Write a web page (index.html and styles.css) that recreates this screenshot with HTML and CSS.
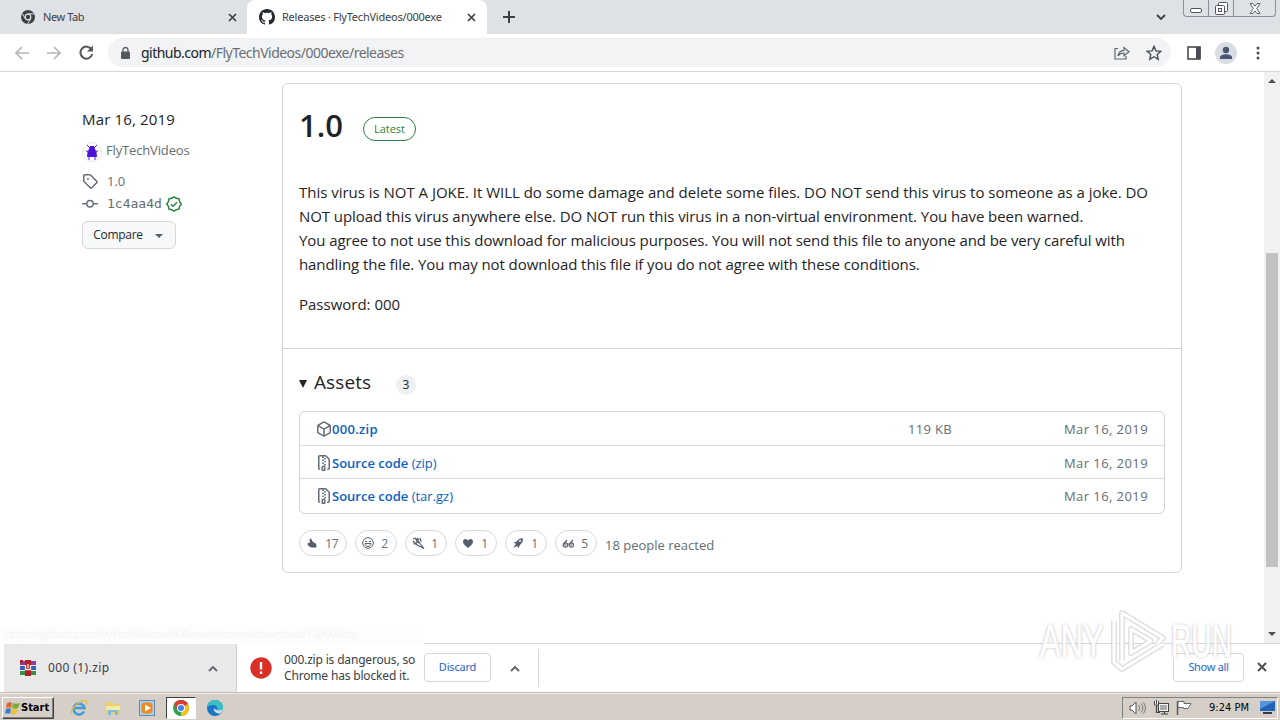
FILE: index.html
```html
<!DOCTYPE html>
<html lang="en">
<head>
    <meta charset="UTF-8">
    <meta name="viewport" content="width=device-width, initial-scale=1.0">
    <title>Releases · FlyTechVideos/000exe</title>
    <link rel="stylesheet" href="styles.css">
</head>
<body>
    <div class="tabstrip">
        <div class="tab">
            <svg class="favicon" width="14" height="14" viewBox="0 0 14 14"><circle cx="7" cy="7" r="7" fill="#3c4043"/><circle cx="7" cy="7" r="3.4" fill="#dee1e6"/><circle cx="7" cy="7" r="2.2" fill="#3c4043"/><path d="M7 3.8h6.4M4.2 8.6L1 3.2M9.8 8.6L6.6 14" stroke="#dee1e6" stroke-width="1"/></svg>
            <span class="tab-title">New Tab</span>
            <svg class="tab-close" width="9" height="9" viewBox="0 0 9 9"><path d="M1 1l7 7M8 1l-7 7" stroke="#3c4043" stroke-width="1.7"/></svg>
        </div>
        <div class="tab active">
            <svg class="favicon" width="16" height="16" viewBox="0 0 16 16"><path fill="#24292f" d="M8 0c4.42 0 8 3.58 8 8a8.013 8.013 0 0 1-5.45 7.59c-.4.08-.55-.17-.55-.38 0-.27.01-1.13.01-2.2 0-.75-.25-1.23-.54-1.48 1.78-.2 3.65-.88 3.65-3.95 0-.88-.31-1.59-.82-2.15.08-.2.36-1.02-.08-2.12 0 0-.67-.22-2.2.82-.64-.18-1.32-.27-2-.27-.68 0-1.36.09-2 .27-1.53-1.03-2.2-.82-2.2-.82-.44 1.1-.16 1.92-.08 2.12-.51.56-.82 1.28-.82 2.15 0 3.06 1.86 3.75 3.64 3.95-.23.2-.44.55-.51 1.07-.46.21-1.61.55-2.33-.66-.15-.24-.6-.83-1.23-.82-.67.01-.27.38.01.53.34.19.73.9.82 1.13.16.45.68 1.31 2.69.94 0 .67.01 1.3.01 1.49 0 .21-.15.45-.55.38A7.995 7.995 0 0 1 0 8c0-4.42 3.58-8 8-8Z"/></svg>
            <span class="tab-title">Releases · FlyTechVideos/000exe</span>
            <svg class="tab-close" width="9" height="9" viewBox="0 0 9 9"><path d="M1 1l7 7M8 1l-7 7" stroke="#3c4043" stroke-width="1.7"/></svg>
        </div>
        <svg class="new-tab" width="12" height="12" viewBox="0 0 12 12"><path d="M6 0v12M0 6h12" stroke="#3c4043" stroke-width="2"/></svg>
        <svg class="tab-search" width="10" height="7" viewBox="0 0 10 7"><path d="M1 1l4 4 4-4" fill="none" stroke="#3c4043" stroke-width="1.8"/></svg>
        <div class="window-buttons">
            <span class="win-btn win-min"><svg width="13" height="5" viewBox="0 0 13 5"><rect x=".5" y=".5" width="11" height="4" rx="1.5" fill="#fff" stroke="#50545e"/></svg></span>
            <span class="win-btn win-max"><svg width="13" height="13" viewBox="0 0 13 13"><rect x="3.5" y=".5" width="9" height="9" rx="1" fill="#fff" stroke="#50545e"/><rect x=".5" y="3.5" width="9" height="9" rx="1" fill="#fff" stroke="#50545e"/><rect x="3.5" y="6.5" width="3" height="3" fill="none" stroke="#50545e"/></svg></span>
            <span class="win-btn win-close"><svg width="12" height="11" viewBox="0 0 12 11"><path d="M1 .5h3l2 2.700 2-2.700h3L7.700 5.500l3.300 5H8L6 7.800 4 10.500H1l3.300-5z" fill="#fff" stroke="#50545e" stroke-width=".9"/></svg></span>
        </div>
    </div>

    <div class="toolbar">
        <svg class="nav-icon" width="14" height="14" viewBox="0 0 14 14"><path d="M14 7H1.500M7 1L1 7l6 6" fill="none" stroke="#b4b6b9" stroke-width="1.700"/></svg>
        <svg class="nav-icon" width="14" height="14" viewBox="0 0 14 14"><path d="M0 7h12.500M7 1l6 6-6 6" fill="none" stroke="#b4b6b9" stroke-width="1.700"/></svg>
        <svg class="nav-icon" width="15" height="15" viewBox="0 0 15 15"><path d="M12.600 4.500A6 6 0 1 0 13.300 9" fill="none" stroke="#55585c" stroke-width="2"/><path d="M14 .500v6H8z" fill="#55585c"/></svg>
        <div class="omnibox">
            <svg width="9" height="12" viewBox="0 0 9 12"><rect y="4.500" width="9" height="7.500" rx="1" fill="#55585c"/><path d="M2 5V3a2.500 2.500 0 0 1 5 0v2" fill="none" stroke="#55585c" stroke-width="1.300"/></svg>
            <span class="url"><b>github.com</b>/FlyTechVideos/000exe/releases</span>
            <svg class="share" width="16" height="15" viewBox="0 0 16 15"><path d="M4 3.500H1v10.500h11V11M4 11c.5-3.500 2.500-5.500 6-5.700V2.500l5 4.200-5 4V8C7.500 8 5.500 9 4 11z" fill="none" stroke="#5f6368" stroke-width="1.200"/></svg>
            <svg class="star" width="16" height="16" viewBox="0 0 14 14"><path d="M7 1.200l1.700 3.900 4.300.4-3.200 2.800.9 4.200L7 10.300l-3.700 2.200.9-4.200L1 5.500l4.300-.4z" fill="none" stroke="#4a4d52" stroke-width="1.200"/></svg>
        </div>
        <svg class="side-panel" width="14" height="14" viewBox="0 0 14 14"><rect x="1" y="1" width="12" height="12" fill="#fff" stroke="#4a4d52" stroke-width="1.600"/><rect x="9" y="1" width="4.500" height="12" fill="#4a4d52"/></svg>
        <svg class="profile" width="22" height="22" viewBox="0 0 22 22"><circle cx="11" cy="11" r="11" fill="#dadde2"/><circle cx="11" cy="8" r="3.200" fill="#4a5673"/><path d="M5 17v-1.500c0-2.200 3-3.300 6-3.300s6 1.100 6 3.300V17z" fill="#4a5673"/></svg>
        <svg class="kebab" width="4" height="14" viewBox="0 0 4 14"><g fill="#4a4d52"><circle cx="2" cy="2" r="1.500"/><circle cx="2" cy="7" r="1.500"/><circle cx="2" cy="12" r="1.500"/></g></svg>
    </div>

    <div class="viewport">
        <div class="sidebar">
            <div class="release-date">Mar 16, 2019</div>
            <div class="author">
                <svg width="20" height="20" viewBox="0 0 20 20"><circle cx="10" cy="10" r="9.500" fill="#fff" stroke="#e4e4e8"/><path d="M8 4h4l1 3 1.500 3 .5 5H5l.500-5L7 7z" fill="#4a12d8"/><path d="M5 3l3 3M15 3l-3 3M4 9l3 .5M16 9l-3 .5M7 13v5M13 13v5" stroke="#5b25dc" stroke-width="1"/></svg>
                <span>FlyTechVideos</span>
            </div>
            <div class="meta tag-row">
                <svg width="16" height="16" viewBox="0 0 16 16"><path fill="#656d76" d="M1 7.775V2.750C1 1.784 1.784 1 2.750 1h5.025c.464 0 .91.184 1.238.513l6.250 6.250a1.750 1.750 0 0 1 0 2.474l-5.026 5.026a1.750 1.750 0 0 1-2.474 0l-6.250-6.250A1.752 1.752 0 0 1 1 7.775Zm1.500 0c0 .066.026.13.073.177l6.250 6.250a.25.25 0 0 0 .354 0l5.025-5.025a.25.25 0 0 0 0-.354l-6.250-6.250a.25.25 0 0 0-.177-.073H2.750a.25.25 0 0 0-.25.25ZM6 5a1 1 0 1 1 0 2 1 1 0 0 1 0-2Z"/></svg>
                <span>1.0</span>
            </div>
            <div class="meta commit-row">
                <svg width="16" height="16" viewBox="0 0 16 16"><path fill="#656d76" d="M11.930 8.500a4.002 4.002 0 0 1-7.860 0H.75a.75.75 0 0 1 0-1.500h3.320a4.002 4.002 0 0 1 7.860 0h3.320a.75.75 0 0 1 0 1.500Zm-1.430-.75a2.500 2.500 0 1 0-5 0 2.500 2.500 0 0 0 5 0Z"/></svg>
                <code>1c4aa4d</code>
                <svg width="16" height="16" viewBox="0 0 16 16"><path d="M8 .9l2.300 1.400 2.700.5.600 2.800L15.200 8l-1.600 2.400-.6 2.700-2.700.6L8 15.200l-2.300-1.500-2.700-.6-.6-2.700L.8 8l1.600-2.400.6-2.800 2.700-.5z" fill="none" stroke="#2c8244" stroke-width="1.500" stroke-linejoin="round"/><path d="M5 8.200l2.100 2L11 6.200" fill="none" stroke="#2c8244" stroke-width="1.500"/></svg>
            </div>
            <button class="compare">Compare <i class="caret"></i></button>
        </div>

        <div class="release">
            <div class="release-body">
                <div class="release-head">
                    <h1>1.0</h1>
                    <span class="latest">Latest</span>
                </div>
                <div class="notes">
                    <p>
                        <span class="line l1">This virus is NOT A JOKE. It WILL do some damage and delete some files. DO NOT send this virus to someone as a joke. DO</span>
                        <span class="line l2">NOT upload this virus anywhere else. DO NOT run this virus in a non-virtual environment. You have been warned.</span>
                        <span class="line l3">You agree to not use this download for malicious purposes. You will not send this file to anyone and be very careful with</span>
                        <span class="line l4">handling the file. You may not download this file if you do not agree with these conditions.</span>
                    </p>
                    <p><span class="line l5">Password: 000</span></p>
                </div>
            </div>
            <div class="assets">
                <div class="assets-head">
                    <i class="disclosure"></i>
                    <h2>Assets</h2>
                    <span class="counter">3</span>
                </div>
                <div class="asset-list">
                    <div class="asset">
                        <svg width="16" height="16" viewBox="0 0 16 16"><path fill="#656d76" d="m8.878.392 5.250 3.045c.54.314.872.89.872 1.514v6.098a1.750 1.750 0 0 1-.872 1.514l-5.250 3.045a1.750 1.750 0 0 1-1.756 0l-5.250-3.045A1.750 1.750 0 0 1 1 11.049V4.951c0-.624.332-1.201.872-1.514L7.122.392a1.750 1.750 0 0 1 1.756 0ZM7.875 1.690l-4.630 2.685L8 7.133l4.755-2.758-4.630-2.685a.248.248 0 0 0-.25 0ZM2.500 5.677v5.372c0 .09.047.171.125.216l4.625 2.683V8.432Zm6.250 8.271 4.625-2.683a.25.25 0 0 0 .125-.216V5.677L8.750 8.432Z"/></svg>
                        <a href="#" class="name-zip"><b>000.zip</b></a>
                        <span class="size">119 KB</span>
                        <span class="date">Mar 16, 2019</span>
                    </div>
                    <div class="asset source-zip">
                        <svg width="16" height="16" viewBox="0 0 16 16"><path fill="#656d76" d="M3.500 1.750v11.500c0 .09.048.173.126.217a.75.75 0 0 1-.752 1.298A1.748 1.748 0 0 1 2 13.250V1.750C2 .784 2.784 0 3.750 0h5.586c.464 0 .909.185 1.237.513l2.914 2.914c.329.328.513.773.513 1.237v8.586A1.750 1.750 0 0 1 12.250 15h-.5a.75.75 0 0 1 0-1.500h.5a.25.25 0 0 0 .25-.25V4.664a.25.25 0 0 0-.073-.177L9.513 1.573a.25.25 0 0 0-.177-.073H7.250a.75.75 0 0 1 0 1.500h-.5a.75.75 0 0 1 0-1.500h-3a.25.25 0 0 0-.25.25Zm3.750 8.750h.5c.966 0 1.750.784 1.750 1.750v3a.75.75 0 0 1-.75.75h-2.500a.75.75 0 0 1-.75-.75v-3c0-.966.784-1.750 1.750-1.750ZM6 5.250a.75.75 0 0 1 .75-.75h.5a.75.75 0 0 1 0 1.500h-.5A.75.75 0 0 1 6 5.250Zm.75 2.250h.5a.75.75 0 0 1 0 1.500h-.5a.75.75 0 0 1 0-1.500ZM8 6.750A.75.75 0 0 1 8.750 6h.5a.75.75 0 0 1 0 1.500h-.5A.75.75 0 0 1 8 6.750ZM8.750 3h.5a.75.75 0 0 1 0 1.500h-.5a.75.75 0 0 1 0-1.500ZM8 9.750A.75.75 0 0 1 8.750 9h.5a.75.75 0 0 1 0 1.500h-.5A.75.75 0 0 1 8 9.750Zm-1 2.500v2.250h1v-2.250a.25.25 0 0 0-.25-.25h-.5a.25.25 0 0 0-.25.25Z"/></svg>
                        <a href="#"><b>Source code</b> (zip)</a>
                        <span class="date">Mar 16, 2019</span>
                    </div>
                    <div class="asset">
                        <svg width="16" height="16" viewBox="0 0 16 16"><path fill="#656d76" d="M3.500 1.750v11.500c0 .09.048.173.126.217a.75.75 0 0 1-.752 1.298A1.748 1.748 0 0 1 2 13.250V1.750C2 .784 2.784 0 3.750 0h5.586c.464 0 .909.185 1.237.513l2.914 2.914c.329.328.513.773.513 1.237v8.586A1.750 1.750 0 0 1 12.250 15h-.5a.75.75 0 0 1 0-1.500h.5a.25.25 0 0 0 .25-.25V4.664a.25.25 0 0 0-.073-.177L9.513 1.573a.25.25 0 0 0-.177-.073H7.250a.75.75 0 0 1 0 1.500h-.5a.75.75 0 0 1 0-1.500h-3a.25.25 0 0 0-.25.25Zm3.750 8.750h.5c.966 0 1.750.784 1.750 1.750v3a.75.75 0 0 1-.75.75h-2.500a.75.75 0 0 1-.75-.75v-3c0-.966.784-1.750 1.750-1.750ZM6 5.250a.75.75 0 0 1 .75-.75h.5a.75.75 0 0 1 0 1.500h-.5A.75.75 0 0 1 6 5.250Zm.75 2.250h.5a.75.75 0 0 1 0 1.500h-.5a.75.75 0 0 1 0-1.500ZM8 6.750A.75.75 0 0 1 8.750 6h.5a.75.75 0 0 1 0 1.500h-.5A.75.75 0 0 1 8 6.750ZM8.750 3h.5a.75.75 0 0 1 0 1.500h-.5a.75.75 0 0 1 0-1.500ZM8 9.750A.75.75 0 0 1 8.750 9h.5a.75.75 0 0 1 0 1.500h-.5A.75.75 0 0 1 8 9.750Zm-1 2.500v2.250h1v-2.250a.25.25 0 0 0-.25-.25h-.5a.25.25 0 0 0-.25.25Z"/></svg>
                        <a href="#"><b>Source code</b> (tar.gz)</a>
                        <span class="date">Mar 16, 2019</span>
                    </div>
                </div>
                <div class="reactions">
                    <span class="reaction first"><svg width="12" height="12" viewBox="0 0 12 12"><path d="M1.500 6.500L4 5.500 3.500 2l1.500-.5L7 5l3 1.500.5 4H5L2 8.500z" fill="#57606a"/></svg>17</span>
                    <span class="reaction"><svg width="12" height="12" viewBox="0 0 12 12"><circle cx="6" cy="6" r="5.300" fill="none" stroke="#57606a"/><path d="M3 4.500h2M7 4.500h2M3 6.500h6c0 4-6 4-6 0z" fill="none" stroke="#57606a"/></svg>2</span>
                    <span class="reaction"><svg width="13" height="12" viewBox="0 0 13 12"><path d="M6 4l6 7.500L3.500 7zM1 2l3-1M5 1l2 2M1 4l2 2M1 7l3-1M4 3l3 3M8 1l1 4M3 1l3 3" fill="none" stroke="#57606a" stroke-width="1.200"/></svg>1</span>
                    <span class="reaction"><svg width="12" height="12" viewBox="0 0 12 12"><path d="M6 11C3 8.500 1 7 1 4.500 1 1.500 4.500 1 6 3.500 7.500 1 11 1.500 11 4.500 11 7 9 8.500 6 11z" fill="#57606a"/></svg>1</span>
                    <span class="reaction"><svg width="12" height="12" viewBox="0 0 12 12"><path d="M11 1L7 2 4 5 1.500 5.500 4 7 1 11l4-2 1.500 2L8 8l2.500-3z" fill="#57606a"/><circle cx="8" cy="4" r="1" fill="#fff"/></svg>1</span>
                    <span class="reaction"><svg width="13" height="12" viewBox="0 0 13 12"><g fill="none" stroke="#57606a" stroke-width="1.200"><circle cx="3.300" cy="8" r="2.200"/><circle cx="9.300" cy="8" r="2.200"/><path d="M2 6.500L5 3M8 6.500L11 3M5.500 7h1.500M2 8h2M8 8h2"/></g></svg>5</span>
                    <span class="reacted">18 people reacted</span>
                </div>
            </div>
        </div>

        <div class="scrollbar">
            <i class="arrow-up"></i>
            <div class="thumb"></div>
            <i class="arrow-down"></i>
        </div>
    </div>

    <div class="downloads">
        <div class="download-item">
            <svg width="16" height="16" viewBox="0 0 16 16"><path fill="#8d3f9e" d="M0 1h16v4H0z"/><path fill="#3560b5" d="M0 6h16v4H0z"/><path fill="#3d8f45" d="M0 11h16v4H0z"/><path fill="#b3202c" d="M5 0h6v16H5zM0 0h3v3H0z"/><path d="M5.500 5v4.500h5V5M8 4v4" fill="none" stroke="#f4e9d8" stroke-width="1.300"/></svg>
            <span class="file-name">000 (1).zip</span>
            <svg class="chev" width="10" height="7" viewBox="0 0 10 7"><path d="M1 6l4-4 4 4" fill="none" stroke="#5f6368" stroke-width="1.800"/></svg>
        </div>
        <div class="danger-item">
            <svg width="22" height="22" viewBox="0 0 22 22"><circle cx="11" cy="11" r="10.700" fill="#d92f27"/><path d="M11 5v7.500M11 14.500v2.500" stroke="#fff" stroke-width="2.400"/></svg>
            <span class="warning">000.zip is dangerous, so<br>Chrome has blocked it.</span>
            <button class="btn discard">Discard</button>
            <svg class="chev" width="10" height="7" viewBox="0 0 10 7"><path d="M1 6l4-4 4 4" fill="none" stroke="#5f6368" stroke-width="1.800"/></svg>
        </div>
        <button class="btn show-all">Show all</button>
        <svg class="close-bar" width="10" height="10" viewBox="0 0 10 10"><path d="M1 1l8 8M9 1L1 9" stroke="#4a4d52" stroke-width="1.900"/></svg>
    </div>

    <div class="taskbar">
        <div class="start">
            <svg width="16" height="14" viewBox="0 0 16 14"><path d="M2 2c2-1 4-1 5 0L6 7C5 6 3 6 1 7z" fill="#e8622a"/><path d="M8 2c2 1 4 1 7 0l-2 5c-2 1-4 1-6 0z" fill="#7dae35"/><path d="M1 8c2-1 4-1 5 0l-1 5c-1-1-3-1-5 0z" fill="#3b7fd0"/><path d="M7 8c2 1 4 1 6 0l-1 4c-2 1.500-4 1.500-6 1z" fill="#f2bd2c"/></svg>
            <span>Start</span>
        </div>
        <div class="quick">
            <svg width="18" height="18" viewBox="0 0 18 18"><path d="M14 12.500A5.500 5.500 0 1 1 14.500 9H5" fill="none" stroke="#3d9be0" stroke-width="2.600"/><path d="M2 15C-1 11 11 0 16 2c1 1 .5 3-.5 4" fill="none" stroke="#e7b93c" stroke-width="1.300"/></svg>
        </div>
        <div class="quick">
            <svg width="18" height="18" viewBox="0 0 18 18"><path d="M2 3h6l1 2h7v10H2z" fill="#e9cf73"/><path d="M2 7h14v4H2z" fill="#f7e9a8"/><path d="M4 16v-5h10v5h-3v-3H7v3z" fill="#79bde0"/></svg>
        </div>
        <div class="quick">
            <svg width="16" height="16" viewBox="0 0 16 16"><rect x=".5" y=".5" width="15" height="15" fill="#a9d2f0" stroke="#6089b5"/><rect x="2.500" y="2.500" width="11" height="11" rx="3" fill="#f08a1c"/><path d="M6 4.500v7L12 8z" fill="#fff"/></svg>
        </div>
        <div class="quick running">
            <svg width="16" height="16" viewBox="0 0 16 16"><circle cx="8" cy="8" r="8" fill="#2da14d"/><path d="M8 8L1.100 4A8 8 0 0 1 14.900 4z" fill="#df3b2f"/><path d="M8 8l6.900-4A8 8 0 0 1 8 16z" fill="#fbc116"/><path d="M4.500 10L1.100 4H8z" fill="#df3b2f"/><circle cx="8" cy="8" r="4" fill="#fff"/><circle cx="8" cy="8" r="3" fill="#4182ee"/></svg>
        </div>
        <div class="quick">
            <svg width="16" height="16" viewBox="0 0 16 16"><circle cx="8" cy="8" r="8" fill="#1b74c9"/><path d="M0 7C1 2 5 0 8 0c5 0 8 4 8 7 0 3-3 4-6 3 1-3-1-5-4-5-3 0-5 1-6 2z" fill="#38bfc4"/><path d="M10 10c3 1 5 0 6-2-.3 2-1 4-2.500 5.500C9 14 6 11 7 8c.5 1 1.500 1.700 3 2z" fill="#d5dfdf"/></svg>
        </div>
        <div class="tray">
            <svg width="17" height="14" viewBox="0 0 17 14"><path d="M1 5h2l4-4v12L3 9H1z" fill="#fff" stroke="#555"/><path d="M9.500 4c1.500 2 1.500 4 0 6M12 2.500c2.500 3 2.500 6 0 9M14.500 1.500c2.500 4 2.500 7 0 11" fill="none" stroke="#777"/></svg>
            <svg width="16" height="15" viewBox="0 0 16 15"><rect x="5.500" y="3.500" width="10" height="8" fill="#f4f4f4" stroke="#444"/><rect x="7" y="5" width="7" height="5" fill="#aaa"/><path d="M8 14h7M11.500 12v2M3.500 5v7.500H7" fill="none" stroke="#444" stroke-width="1.200"/><path d="M1.500 1v4h4V1M3.500 0v4" fill="#fff" stroke="#444"/></svg>
            <svg width="16" height="15" viewBox="0 0 16 15"><path d="M1.500 15V1" stroke="#555" stroke-width="1.500"/><path d="M2 1.500h6v2h7l-3 5H7.500v-1H2z" fill="#fff" stroke="#666"/></svg>
            <span class="clock">9:24 PM</span>
            <svg width="15" height="13" viewBox="0 0 15 13"><path d="M0 0h15v10H0z" fill="#2262b8"/><path d="M0 0h15L0 8z" fill="#5796dc"/><path d="M3 11h9v2H3z" fill="#333c4d"/></svg>
        </div>
    </div>

    <div class="status-bubble">https://github.com/FlyTechVideos/000exe/releases/download/1.0/000.zip</div>
    <div class="watermark">
        <span class="any">ANY</span>
        <svg width="60" height="64" viewBox="0 0 60 64"><g fill="none" stroke-linejoin="round"><path d="M6 12v41l8 7 41-25M14 52V4l41 25-6 6M23 20v24l20-12z" stroke="#dcdcdc" stroke-width="6"/><path d="M6 12v41l8 7 41-25M14 52V4l41 25-6 6M23 20v24l20-12z" stroke="#fff" stroke-width="3"/></g></svg>
        <span class="run">RUN</span>
    </div>
</body>
</html>
```
FILE: styles.css
```css
* {
    box-sizing: border-box;
}
body {
    margin: 0;
    width: 1280px;
    height: 720px;
    overflow: hidden;
    display: flex;
    flex-direction: column;
    position: relative;
    background: #fff;
    color: #1f2328;
    font-family: "Open Sans", "Noto Sans", sans-serif;
    white-space: nowrap;
}
svg {
    display: block;
    flex: none;
}
button {
    font-family: inherit;
    padding: 0;
}

/* tab strip */
.tabstrip {
    height: 34px;
    flex: none;
    display: flex;
    align-items: center;
    background: #dee1e6;
    font-family: "Noto Sans", sans-serif;
}
.tab {
    width: 247px;
    height: 34px;
    display: flex;
    align-items: center;
    padding: 0 10px 0 21px;
    font-size: 11px;
    letter-spacing: -.4px;
    color: #3c4043;
}
.tab.active {
    width: 240px;
    padding: 0 11px 0 12px;
    background: #fff;
    border-radius: 8px 8px 0 0;
    letter-spacing: -.22px;
}
.tab-title {
    flex: 1;
    margin-left: 8px;
    padding-bottom: 2px;
}
.active .tab-title {
    margin-left: 7px;
}
.new-tab {
    margin-left: 16px;
}
.tab-search {
    margin-left: auto;
    margin-right: 17px;
}
.window-buttons {
    display: flex;
    align-self: flex-start;
    width: 93px;
    height: 17px;
    margin-right: 4px;
    border: 1px solid #8b8f98;
    border-top: 0;
    border-radius: 0 0 4px 4px;
}
.win-btn {
    width: 25px;
    display: flex;
    align-items: center;
    justify-content: center;
    border-right: 1px solid #8b8f98;
}
.win-min {
    align-items: flex-end;
    padding-bottom: 3px;
}
.win-close {
    flex: 1;
    border-right: 0;
}

/* toolbar */
.toolbar {
    height: 38px;
    flex: none;
    display: flex;
    align-items: center;
    padding: 0 20px 0 15px;
    border-bottom: 1px solid #d5d7da;
}
.nav-icon {
    margin-right: 18px;
}
.nav-icon:nth-child(3) {
    margin-right: 14px;
}
.omnibox {
    width: 1063px;
    height: 29px;
    display: flex;
    align-items: center;
    padding: 0 9px 0 13px;
    background: #f1f3f4;
    border-radius: 15px;
}
.url {
    margin-left: 11px;
    font-size: 14px;
    font-family: "Noto Sans", sans-serif;
    letter-spacing: -.52px;
    color: #6b6f74;
}
.url b {
    font-weight: normal;
    color: #202124;
}
.share {
    margin-left: auto;
}
.star {
    margin-left: 16px;
}
.side-panel {
    margin-left: 16px;
}
.profile {
    margin-left: 14px;
}
.kebab {
    margin-left: auto;
}

/* page */
.viewport {
    height: 571px;
    flex: none;
    display: flex;
    align-items: flex-start;
}
.sidebar {
    width: 282px;
    padding: 35px 0 0 82px;
}
.release-date {
    font-size: 15px;
    line-height: 24px;
    letter-spacing: .15px;
}
.author {
    display: flex;
    align-items: center;
    height: 20px;
    margin-top: 11px;
    gap: 4px;
    font-size: 13px;
    letter-spacing: -.15px;
    color: #656d76;
}
.author span {
    padding-bottom: 4px;
}
.meta {
    display: flex;
    align-items: center;
    height: 20px;
    font-size: 13px;
    color: #656d76;
}
.meta svg {
    margin-right: 9px;
}
.tag-row {
    margin-top: 9px;
}
.commit-row {
    margin-top: 3px;
}
.meta code {
    padding-bottom: 1px;
    font-family: "DejaVu Sans Mono", monospace;
    font-size: 13px;
}
.commit-row code + svg {
    margin: 0 0 0 4px;
}
.compare {
    display: flex;
    align-items: center;
    justify-content: center;
    width: 94px;
    height: 28px;
    margin-top: 7px;
    padding: 0 2px 1px 0;
    background: #f6f8fa;
    border: 1px solid #d3d6da;
    border-radius: 6px;
    font-size: 12px;
    letter-spacing: -.3px;
    color: #24292f;
}
.caret {
    margin: 2px 0 0 12px;
    border: 4px solid transparent;
    border-top-color: #57606a;
    border-bottom: 0;
}
.release {
    width: 900px;
    height: 490px;
    margin-top: 11px;
    border: 1px solid #d0d3d8;
    border-radius: 6px;
}
.release-body {
    height: 265px;
    padding: 22px 16px 0;
    border-bottom: 1px solid #d0d3d8;
}
.release-head {
    display: flex;
    align-items: center;
    height: 42px;
}
h1 {
    margin: 0;
    padding-bottom: 4px;
    font-size: 31px;
    font-weight: 600;
    line-height: 40px;
}
.latest {
    width: 53px;
    height: 24px;
    margin: 4px 0 0 20px;
    border: 1px solid #2c8244;
    border-radius: 12px;
    color: #2c8244;
    font-size: 11px;
    line-height: 22px;
    text-align: center;
}
.notes {
    margin-top: 32px;
    font-size: 15px;
    line-height: 24px;
}
.notes p {
    margin: 0 0 16px;
}
.line {
    display: block;
}
.l1 {
    letter-spacing: -.02px;
}
.l2 {
    letter-spacing: -.063px;
}
.l3 {
    letter-spacing: -.09px;
}
.l4 {
    letter-spacing: -.08px;
}
.assets {
    padding: 22px 16px 0;
}
.assets-head {
    display: flex;
    align-items: center;
    height: 24px;
}
.disclosure {
    margin-top: 2px;
    border: 4.5px solid transparent;
    border-top: 8px solid #1f2328;
    border-bottom: 0;
}
h2 {
    width: 58px;
    margin: 0 0 0 7px;
    padding-bottom: 2px;
    font-size: 19px;
    font-weight: 500;
    letter-spacing: .1px;
}
.counter {
    min-width: 20px;
    height: 20px;
    margin: 4px 0 0 24px;
    border-radius: 10px;
    background: #eff0f2;
    font-size: 12px;
    line-height: 20px;
    text-align: center;
}
.asset-list {
    height: 103px;
    margin-top: 16px;
    border: 1px solid #d0d3d8;
    border-radius: 6px;
}
.asset {
    display: flex;
    align-items: center;
    height: 33px;
    padding: 0 16px;
    font-size: 13px;
    color: #656d76;
}
.asset + .asset {
    border-top: 1px solid #d8dbdf;
}
.asset:last-child {
    height: 34px;
}
.source-zip {
    padding-top: 2px;
}
.asset a {
    color: #0a5fc4;
    text-decoration: none;
}
.asset b {
    font-weight: 600;
}
.name-zip {
    letter-spacing: .3px;
}
.size {
    width: 44px;
    margin-left: auto;
    letter-spacing: .3px;
}
.date {
    width: 84px;
    margin-left: auto;
    letter-spacing: .42px;
}
.size + .date {
    margin-left: 112px;
}
.reactions {
    display: flex;
    align-items: center;
    gap: 8px;
    margin-top: 16px;
}
.reaction {
    display: flex;
    align-items: center;
    justify-content: space-between;
    width: 42px;
    height: 26px;
    padding: 0 8px 0 6px;
    border: 1px solid #d5d9de;
    border-radius: 13px;
    font-size: 12px;
    color: #656d76;
}
.reaction.first {
    width: 48px;
    letter-spacing: -.5px;
}
.reacted {
    padding-top: 4px;
    font-size: 13px;
    color: #656d76;
}
.scrollbar {
    display: flex;
    flex-direction: column;
    align-items: center;
    width: 16px;
    height: 571px;
    margin-left: auto;
    padding: 7px 0;
    background: #f1f1f1;
}
.arrow-up {
    border: 4px solid transparent;
    border-bottom-color: #505050;
    border-top: 0;
}
.arrow-down {
    margin-top: auto;
    border: 4px solid transparent;
    border-top-color: #505050;
    border-bottom: 0;
}
.thumb {
    width: 12px;
    height: 314px;
    margin-top: 170px;
    background: #c1c1c1;
}

/* download shelf */
.downloads {
    height: 49px;
    flex: none;
    display: flex;
    align-items: center;
    border-top: 1px solid #d5d7da;
    font-family: "Noto Sans", sans-serif;
    font-size: 12px;
    color: #3c4043;
}
.download-item {
    display: flex;
    align-items: center;
    width: 233px;
    height: 48px;
    margin-left: 4px;
    padding: 0 18px 0 16px;
    background: #e9e9ea;
    border-right: 1px solid #cfcfd1;
}
.file-name {
    margin-left: 12px;
    padding-bottom: 2px;
    letter-spacing: .4px;
}
.download-item .chev {
    margin-left: auto;
}
.danger-item {
    display: flex;
    align-items: center;
    width: 302px;
    height: 38px;
    padding-left: 13px;
    border-right: 1px solid #d5d7da;
}
.warning {
    width: 140px;
    margin-left: 12px;
    line-height: 16px;
    letter-spacing: -.17px;
}
.btn {
    height: 29px;
    margin-bottom: 1px;
    padding-bottom: 2px;
    background: #fff;
    border: 1px solid #d5d7da;
    border-radius: 4px;
    color: #2566c8;
    font-family: "Noto Sans", sans-serif;
    font-size: 11px;
    letter-spacing: -.3px;
}
.discard {
    width: 67px;
    letter-spacing: -.2px;
}
.danger-item .chev {
    margin-left: 19px;
}
.show-all {
    width: 71px;
    margin-left: auto;
}
.close-bar {
    margin: 0 13px 2px 13px;
}

/* taskbar */
.taskbar {
    height: 28px;
    flex: none;
    display: flex;
    align-items: center;
    background: #d5cfc7;
    border-top: 1px solid #c3beb7;
    box-shadow: inset 0 1px #efece7;
    padding: 2px 2px 0;
    font-family: "DejaVu Sans Condensed", sans-serif;
    color: #000;
}
.start {
    display: flex;
    align-items: center;
    width: 52px;
    height: 22px;
    padding-left: 2px;
    border: 1px solid;
    border-color: #fff #404040 #404040 #fff;
    box-shadow: inset -1px -1px #808080;
    font-size: 11px;
    font-weight: bold;
}
.quick {
    display: flex;
    align-items: center;
    justify-content: center;
    width: 30px;
    height: 22px;
    margin-left: 4px;
}
.start + .quick {
    margin-left: 10px;
}
.running {
    background: #fff;
    border: 1px solid;
    border-color: #404040 #fff #fff #404040;
}
.tray {
    display: flex;
    align-items: center;
    width: 156px;
    height: 22px;
    margin-left: auto;
    padding: 0 2px 0 6px;
    gap: 7px;
    border: 1px solid;
    border-color: #808080 #fff #fff #808080;
    font-size: 11px;
}
.clock {
    margin: 0 auto;
    padding-left: 6px;
}

/* overlays */
.status-bubble {
    position: absolute;
    left: 0;
    top: 626px;
    width: 424px;
    height: 18px;
    padding-left: 5px;
    background: #fdfdfd;
    color: #f4f4f4;
    font-size: 11px;
    line-height: 16px;
    letter-spacing: -.3px;
}
.watermark {
    position: absolute;
    left: 1040px;
    top: 609px;
    display: flex;
    align-items: center;
    width: 194px;
    opacity: .9;
    font-family: "Liberation Sans", sans-serif;
    font-size: 47px;
    line-height: 36px;
    color: #fff;
    -webkit-text-stroke: 1px #fff;
    text-shadow: 0 0 2px #b4b4b4, 0 0 4px #bcbcbc;
}
.watermark svg {
    margin: 0 3px 0 4px;
}
.any,
.run {
    width: 64px;
    transform: scaleX(.66);
    transform-origin: 0 50%;
}
.run {
    width: 60px;
    transform: scaleX(.6);
}
```
